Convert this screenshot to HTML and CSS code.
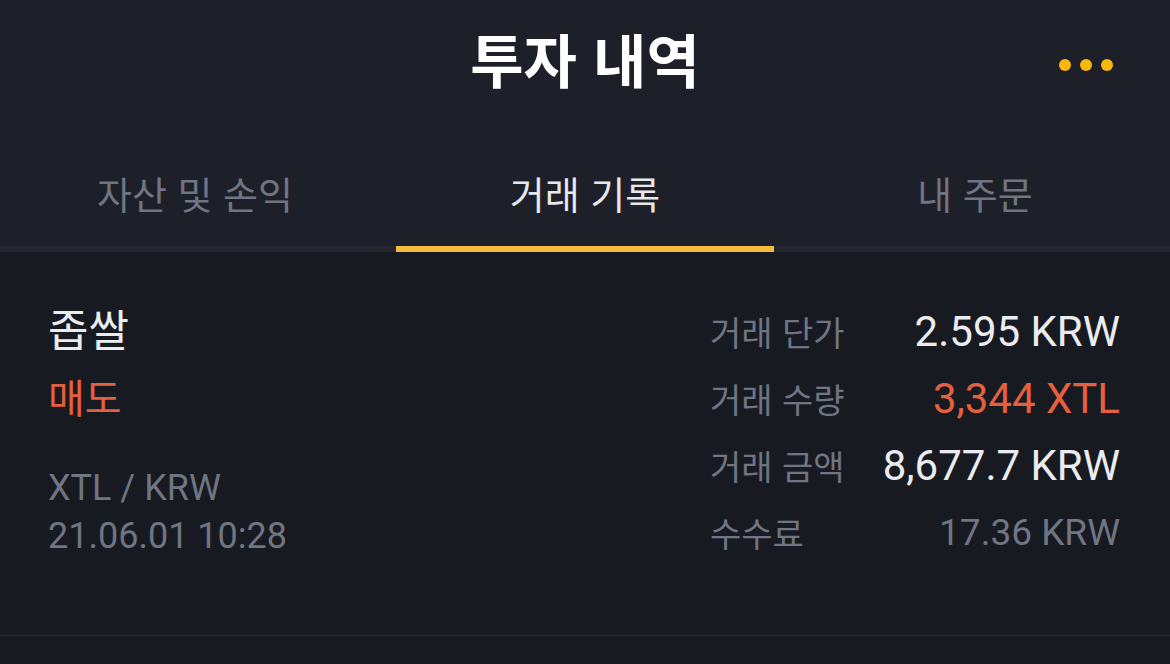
FILE: index.html
```html
<!DOCTYPE html>
<html lang="ko">
<head>
<meta charset="utf-8">
<link rel="stylesheet" href="styles.css">
</head>
<body>
<div class="app">
  <header class="header">
    <div class="topbar">
      <div class="side"></div>
      <h1 class="title">투자 내역</h1>
      <div class="side side-right">
        <button class="more" aria-label="더보기"><span class="dot"></span><span class="dot"></span><span class="dot"></span></button>
      </div>
    </div>
    <nav class="tabs">
      <div class="tab">자산 및 손익</div>
      <div class="tab active">거래 기록</div>
      <div class="tab">내 주문</div>
    </nav>
  </header>
  <main class="list">
    <section class="trade">
      <div class="left">
        <div class="name">좁쌀</div>
        <div class="side-label sell">매도</div>
        <div class="meta">
          <div class="pair">XTL / KRW</div>
          <div class="date">21.06.01 10:28</div>
        </div>
      </div>
      <div class="right">
        <div class="row"><span class="label">거래 단가</span><span class="value">2.595 KRW</span></div>
        <div class="row"><span class="label">거래 수량</span><span class="value sell">3,344 XTL</span></div>
        <div class="row"><span class="label">거래 금액</span><span class="value">8,677.7 KRW</span></div>
        <div class="row"><span class="label">수수료</span><span class="value muted">17.36 KRW</span></div>
      </div>
    </section>
  </main>
</div>
</body>
</html>
```
FILE: styles.css
```css
* { box-sizing: border-box; }
html, body { margin: 0; padding: 0; }
body {
  background: #181a21;
  font-family: "Roboto", "Noto Sans CJK KR", sans-serif;
  color: #eaecef;
  width: 1170px;
  height: 664px;
  overflow: hidden;
}
.header { background: #1e2029; }
.topbar {
  display: grid;
  grid-template-columns: 1fr auto 1fr;
  align-items: center;
  height: 124px;
  padding-bottom: 8px;
}
.title {
  margin: 0;
  font-family: "Noto Sans CJK KR", sans-serif;
  font-weight: 700;
  font-size: 58px;
  line-height: 1;
  color: #ffffff;
}
.side-right { display: flex; justify-content: flex-end; padding-right: 57px; }
.more {
  display: flex;
  gap: 9px;
  margin-top: 14px;
  background: none;
  border: 0;
  padding: 0;
}
.dot { width: 12px; height: 12px; border-radius: 50%; background: #f8b70c; }
.tabs {
  display: grid;
  grid-template-columns: repeat(3, 1fr);
  height: 128px;
  border-bottom: 6px solid #242732;
}
.tab {
  position: relative;
  display: flex;
  align-items: center;
  justify-content: center;
  padding-top: 14px;
  font-family: "Noto Sans CJK KR", sans-serif;
  font-size: 38px;
  color: #6f7582;
}
.tab.active { color: #e6e8eb; }
.tab.active::after {
  content: "";
  position: absolute;
  left: 6px;
  right: 6px;
  bottom: -6px;
  height: 6px;
  background: #f3bc3c;
}
.trade {
  display: flex;
  justify-content: space-between;
  padding: 46px 50px 40px 48px;
  border-bottom: 1px solid #272a33;
  height: 384px;
}
.left { display: flex; flex-direction: column; }
.name { font-family: "Noto Sans CJK KR", sans-serif; font-size: 44px; line-height: 60px; color: #eaecef; }
.side-label { margin-top: 6px; font-family: "Noto Sans CJK KR", sans-serif; font-size: 40px; line-height: 64px; }
.sell { color: #e4603e; }
.meta { margin-top: 36px; font-size: 36px; line-height: 48px; color: #6f7582; }
.right { display: flex; flex-direction: column; width: 410px; }
.row {
  display: flex;
  justify-content: space-between;
  align-items: center;
  height: 67px;
}
.label { font-family: "Noto Sans CJK KR", sans-serif; font-size: 34px; color: #6f7582; }
.value { font-size: 42px; color: #eaecef; }
.value.sell { color: #e4603e; }
.value.muted { color: #6f7582; font-size: 37px; }
```
